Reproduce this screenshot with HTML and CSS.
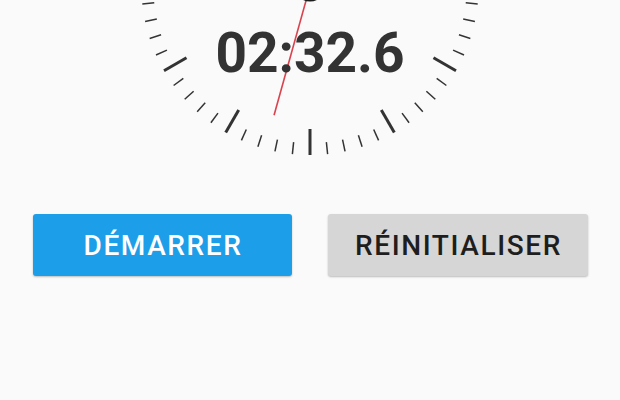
FILE: index.html
```html
<!DOCTYPE html>
<html lang="fr">
<head>
<meta charset="utf-8">
<link rel="stylesheet" href="styles.css">
</head>
<body>
<div class="app">
  <div class="clock">
    <svg class="face" width="620" height="170" viewBox="0 0 620 170">
      <g transform="translate(310,-13.6)" stroke="#333" stroke-linecap="butt">
        <g class="major" stroke-width="3">
          <line x1="0" y1="168.6" x2="0" y2="142.6" transform="rotate(0)"/>
          <line x1="0" y1="168.6" x2="0" y2="142.6" transform="rotate(30)"/>
          <line x1="0" y1="168.6" x2="0" y2="142.6" transform="rotate(60)"/>
          <line x1="0" y1="168.6" x2="0" y2="142.6" transform="rotate(90)"/>
          <line x1="0" y1="168.6" x2="0" y2="142.6" transform="rotate(270)"/>
          <line x1="0" y1="168.6" x2="0" y2="142.6" transform="rotate(300)"/>
          <line x1="0" y1="168.6" x2="0" y2="142.6" transform="rotate(330)"/>
        </g>
        <g class="minor" stroke-width="1.5">
          <line x1="0" y1="168.6" x2="0" y2="156.6" transform="rotate(6)"/>
          <line x1="0" y1="168.6" x2="0" y2="156.6" transform="rotate(12)"/>
          <line x1="0" y1="168.6" x2="0" y2="156.6" transform="rotate(18)"/>
          <line x1="0" y1="168.6" x2="0" y2="156.6" transform="rotate(24)"/>
          <line x1="0" y1="168.6" x2="0" y2="156.6" transform="rotate(36)"/>
          <line x1="0" y1="168.6" x2="0" y2="156.6" transform="rotate(42)"/>
          <line x1="0" y1="168.6" x2="0" y2="156.6" transform="rotate(48)"/>
          <line x1="0" y1="168.6" x2="0" y2="156.6" transform="rotate(54)"/>
          <line x1="0" y1="168.6" x2="0" y2="156.6" transform="rotate(66)"/>
          <line x1="0" y1="168.6" x2="0" y2="156.6" transform="rotate(72)"/>
          <line x1="0" y1="168.6" x2="0" y2="156.6" transform="rotate(78)"/>
          <line x1="0" y1="168.6" x2="0" y2="156.6" transform="rotate(84)"/>
          <line x1="0" y1="168.6" x2="0" y2="156.6" transform="rotate(96)"/>
          <line x1="0" y1="168.6" x2="0" y2="156.6" transform="rotate(264)"/>
          <line x1="0" y1="168.6" x2="0" y2="156.6" transform="rotate(276)"/>
          <line x1="0" y1="168.6" x2="0" y2="156.6" transform="rotate(282)"/>
          <line x1="0" y1="168.6" x2="0" y2="156.6" transform="rotate(288)"/>
          <line x1="0" y1="168.6" x2="0" y2="156.6" transform="rotate(294)"/>
          <line x1="0" y1="168.6" x2="0" y2="156.6" transform="rotate(306)"/>
          <line x1="0" y1="168.6" x2="0" y2="156.6" transform="rotate(312)"/>
          <line x1="0" y1="168.6" x2="0" y2="156.6" transform="rotate(318)"/>
          <line x1="0" y1="168.6" x2="0" y2="156.6" transform="rotate(324)"/>
          <line x1="0" y1="168.6" x2="0" y2="156.6" transform="rotate(336)"/>
          <line x1="0" y1="168.6" x2="0" y2="156.6" transform="rotate(342)"/>
          <line x1="0" y1="168.6" x2="0" y2="156.6" transform="rotate(348)"/>
          <line x1="0" y1="168.6" x2="0" y2="156.6" transform="rotate(354)"/>
        </g>
        <line class="hand" x1="0" y1="0" x2="0" y2="133.7" stroke="#d9434e" stroke-width="1.6" transform="rotate(15.6)"/>
        <circle cx="0" cy="0" r="15.2" fill="#1c1c1c" stroke="none"/>
      </g>
    </svg>
    <div class="time">02:32.6</div>
  </div>
  <div class="actions">
    <button class="btn btn-start">DÉMARRER</button>
    <button class="btn btn-reset">RÉINITIALISER</button>
  </div>
</div>
</body>
</html>
```
FILE: styles.css
```css
html, body {
  margin: 0;
  padding: 0;
  background: #fafafa;
}
body {
  font-family: Roboto, "Noto Sans", sans-serif;
  width: 620px;
  height: 400px;
  overflow: hidden;
}
.clock {
  position: relative;
  height: 170px;
}
.face {
  display: block;
}
.time {
  position: absolute;
  left: 0;
  right: 0;
  top: 25px;
  text-align: center;
  font-size: 55px;
  line-height: 56px;
  font-weight: 700;
  color: #333;
}
.actions {
  display: flex;
  gap: 36px;
  padding: 44px 32px 0 33px;
}
.btn {
  flex: 0 0 259px;
  height: 62px;
  border: none;
  border-radius: 3px;
  font-family: Roboto, "Noto Sans", sans-serif;
  font-size: 28px;
  font-weight: 500;
  letter-spacing: 1.6px;
  box-shadow: 0 1px 2px rgba(0,0,0,0.25);
  padding: 0 0 0 1px;
}
.btn-start {
  background: #1d9ee9;
  color: #fff;
}
.btn-reset {
  flex-basis: 260px;
  background: #d6d6d6;
  color: #1e1e1e;
}
```
